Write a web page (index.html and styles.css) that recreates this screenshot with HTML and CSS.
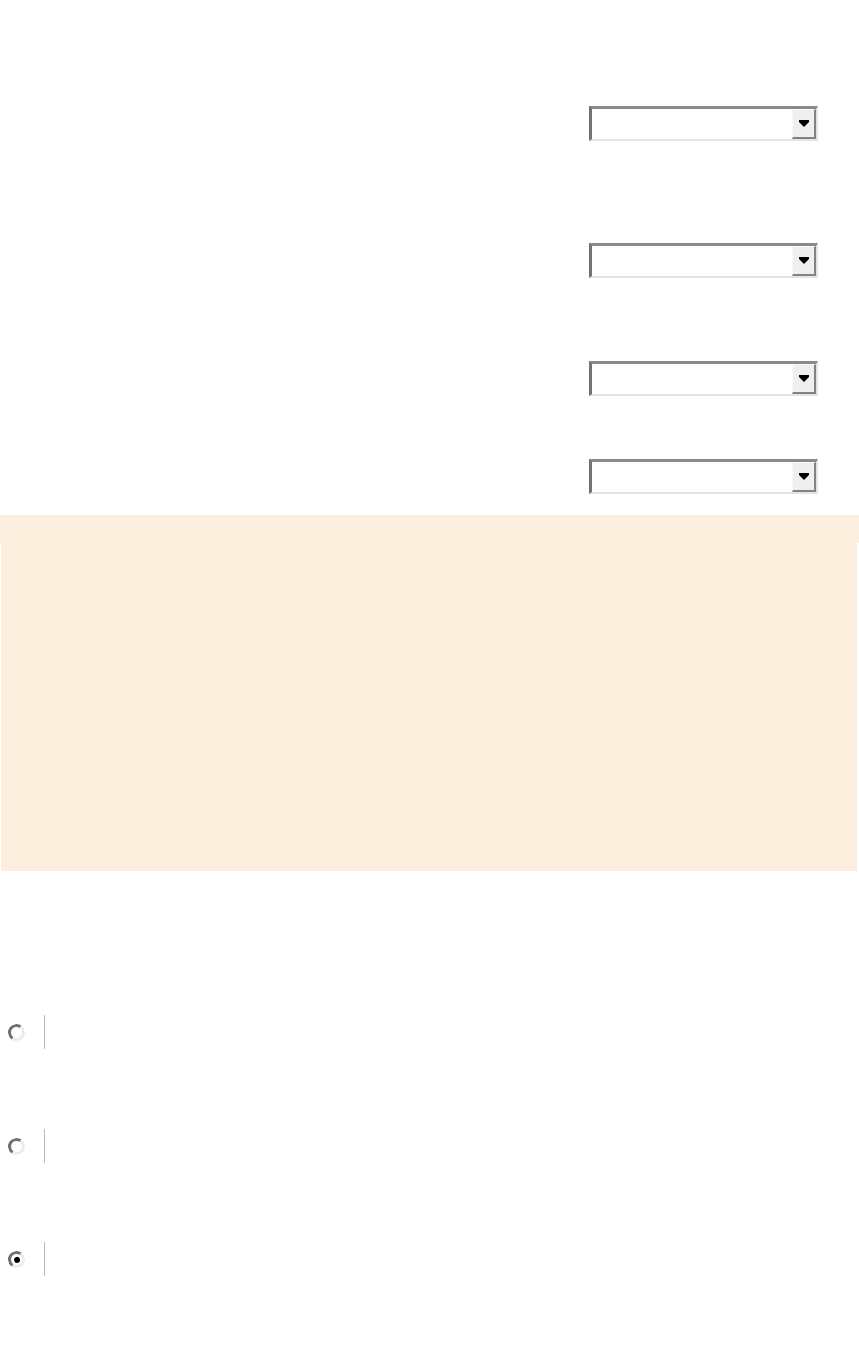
FILE: index.html
```html
<!DOCTYPE html>
<html>
<head>
<meta charset="utf-8">
<link rel="stylesheet" href="styles.css">
</head>
<body>
<div class="form">
  <div class="select s1"><div class="btn"><span class="arrow"></span></div></div>
  <div class="select s2"><div class="btn"><span class="arrow"></span></div></div>
  <div class="select s3"><div class="btn"><span class="arrow"></span></div></div>
  <div class="select s4"><div class="btn"><span class="arrow"></span></div></div>
</div>
<div class="panel">
  <div class="panel-top"></div>
  <div class="panel-body"></div>
</div>
<div class="options">
  <div class="opt o1"><span class="radio"></span><span class="sep"></span></div>
  <div class="opt o2"><span class="radio"></span><span class="sep"></span></div>
  <div class="opt o3"><span class="radio checked"></span><span class="sep"></span></div>
</div>
</body>
</html>
```
FILE: styles.css
```css
html, body { margin: 0; padding: 0; background: #fff; font-family: "Liberation Sans", Arial, sans-serif; }
.form { padding-top: 106px; padding-left: 589px; }
.select {
  box-sizing: border-box;
  width: 229px; height: 35px;
  background: #fff;
  border-top: 3px solid #8a8a8a;
  border-left: 3px solid #727272;
  border-right: 2px solid #e4e4e4;
  border-bottom: 2px solid #e4e4e4;
  display: flex; justify-content: flex-end; align-items: stretch;
}
.s2 { margin-top: 102px; }
.s3 { margin-top: 83px; }
.s4 { margin-top: 63px; }
.btn {
  box-sizing: border-box;
  width: 24px;
  background: #efefef;
  border-top: 1px solid #fafafa;
  border-left: 1px solid #fafafa;
  border-right: 2px solid #828282;
  border-bottom: 2px solid #828282;
  display: flex; align-items: center; justify-content: center;
}
.arrow {
  width: 0; height: 0;
  border-left: 5px solid transparent;
  border-right: 5px solid transparent;
  border-top: 5px solid #000;
  position: relative;
  margin-top: 2px;
}
.arrow::before {
  content: ""; position: absolute; left: -5px; top: -7px; width: 10px; height: 2px; background: #000;
}
.panel { margin-top: 21px; }
.panel-top { height: 28px; background: #fbeedc; }
.panel-body { height: 328px; margin: 0 2px 0 1px; background: #fbeedc; }
.options { padding-top: 144px; }
.opt { display: flex; align-items: center; height: 34px; padding-left: 8px; }
.o2 { margin-top: 80px; }
.o3 { margin-top: 79px; }
.radio {
  box-sizing: border-box;
  width: 17px; height: 17px; border-radius: 50%;
  border: 3px solid;
  border-color: #707070 #ececec #ececec #707070;
  background: #fff;
  display: flex; align-items: center; justify-content: center;
  transform: rotate(-10deg);
}
.radio.checked::after {
  content: ""; width: 6px; height: 6px; border-radius: 50%; background: #000;
}
.sep { width: 1px; height: 34px; background: #bcbcbc; margin-left: 19px; }
```
